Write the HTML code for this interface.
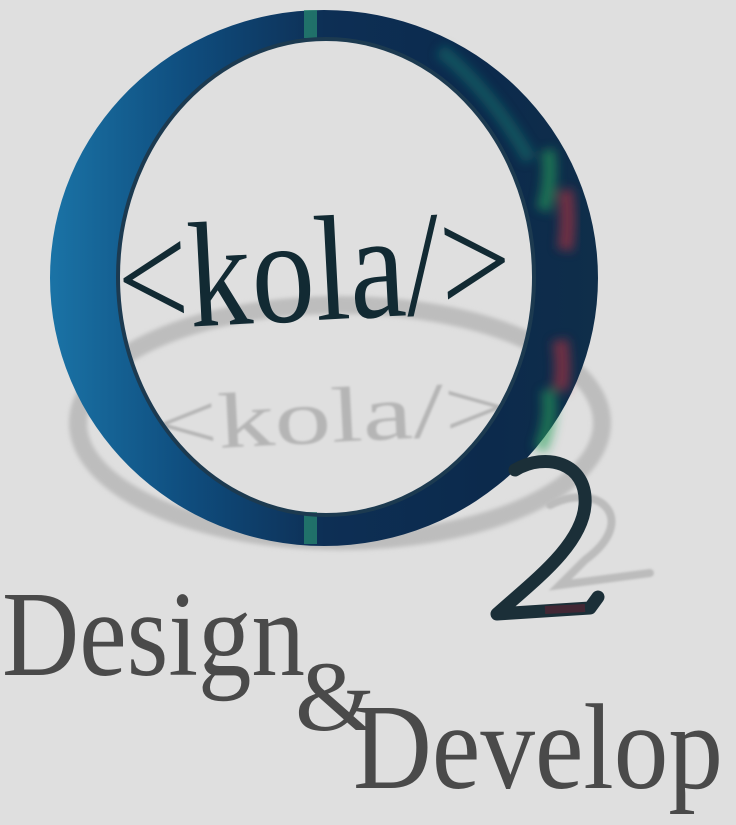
<!DOCTYPE html>
<html><head><meta charset="utf-8"><style>
html,body{margin:0;padding:0;background:#dfdfdf;width:736px;height:825px;overflow:hidden}
</style></head><body>
<svg width="736" height="825" viewBox="0 0 736 825" xmlns="http://www.w3.org/2000/svg">
<defs>
<linearGradient id="rg" x1="0" y1="0" x2="1" y2="0">
<stop offset="0" stop-color="#1a73a6"/>
<stop offset="0.25" stop-color="#0f4d7e"/>
<stop offset="0.5" stop-color="#0d2f55"/>
<stop offset="0.8" stop-color="#0c2a4c"/>
<stop offset="1" stop-color="#0f2e4a"/>
</linearGradient>
<filter id="bl"><feGaussianBlur stdDeviation="2"/></filter>
<filter id="bl2"><feGaussianBlur stdDeviation="1"/></filter>
<filter id="bl3"><feGaussianBlur stdDeviation="5"/></filter>
</defs>
<rect width="736" height="825" fill="#dfdfdf"/>
<!-- shadow ring -->
<ellipse cx="340" cy="423" rx="262" ry="118" fill="none" stroke="#bdbdbd" stroke-width="18" filter="url(#bl)"/>
<text x="154" y="442" font-family="Liberation Serif,serif" font-size="78" fill="#b5b5b5" textLength="354" lengthAdjust="spacingAndGlyphs" transform="rotate(-3 330 420)" filter="url(#bl2)">&lt;kola/&gt;</text>
<!-- main ring -->
<path fill-rule="evenodd" fill="url(#rg)" d="M50 278 a274 268 0 1 0 548 0 a274 268 0 1 0 -548 0 Z M118 277 a208 238 0 1 1 416 0 a208 238 0 1 1 -416 0 Z"/>
<g filter="url(#bl3)">
<path fill="none" stroke="#1d8f7a" stroke-width="14" opacity="0.4" d="M440 50 q50 40 90 110"/>
<path fill="none" stroke="#2aa05a" stroke-width="14" opacity="0.6" d="M548 390 q5 30 -8 60"/>
<path fill="none" stroke="#2aa05a" stroke-width="14" opacity="0.6" d="M548 150 q5 30 -5 60"/>
<path fill="none" stroke="#b03040" stroke-width="16" opacity="0.6" d="M565 190 q5 30 0 60"/>
<path fill="none" stroke="#b03040" stroke-width="16" opacity="0.6" d="M560 340 q5 30 0 50"/>
</g>
<rect x="304" y="10" width="13" height="28" fill="#2a8c70" opacity="0.7"/>
<rect x="304" y="512" width="13" height="32" fill="#2a8c70" opacity="0.7"/>
<ellipse cx="326" cy="277" rx="208" ry="238" fill="none" stroke="#1c3a50" stroke-width="4"/>
<text x="117" y="320" font-family="Liberation Serif,serif" font-size="150" fill="#122a33" textLength="394" lengthAdjust="spacingAndGlyphs" transform="rotate(-3 315 270)">&lt;kola/&gt;</text>
<!-- shadow 2 -->
<path fill="none" stroke="#bcbcbc" stroke-width="8" stroke-linecap="round" d="M550 505 C600 480 640 520 585 560 L560 585 L650 573" filter="url(#bl2)"/>
<!-- 2 -->
<path fill="none" stroke="#1b2f38" stroke-width="13" stroke-linecap="round" stroke-linejoin="round" d="M515 470 C545 452 588 462 585 505 C582 545 535 580 497 614 L590 608 L598 597"/>
<path fill="none" stroke="#6a2030" stroke-width="8" opacity="0.5" d="M545 610 L585 608"/>
<!-- words -->
<g font-family="Liberation Serif,serif" fill="#4a4a4a" font-size="122">
<text x="2" y="675" textLength="303" lengthAdjust="spacingAndGlyphs">Design</text>
<text x="295" y="730" font-size="100" textLength="80" lengthAdjust="spacingAndGlyphs">&amp;</text>
<text x="353" y="788" textLength="370" lengthAdjust="spacingAndGlyphs">Develop</text>
</g>
</svg>
</body></html>
